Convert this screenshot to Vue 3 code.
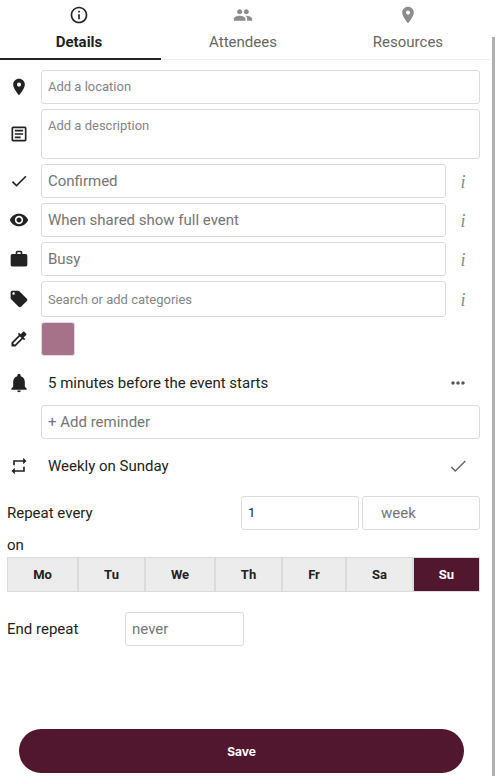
<script setup>
const icons = {
  info: 'M11 7h2v2h-2zm0 4h2v6h-2zm1-9C6.48 2 2 6.48 2 12s4.48 10 10 10 10-4.48 10-10S17.52 2 12 2zm0 18c-4.41 0-8-3.59-8-8s3.59-8 8-8 8 3.59 8 8-3.59 8-8 8z',
  group: 'M16 11c1.66 0 2.99-1.34 2.99-3S17.66 5 16 5c-1.66 0-3 1.34-3 3s1.34 3 3 3zm-8 0c1.66 0 2.99-1.34 2.99-3S9.66 5 8 5C6.34 5 5 6.34 5 8s1.34 3 3 3zm0 2c-2.33 0-7 1.17-7 3.5V19h14v-2.5c0-2.33-4.67-3.5-7-3.5zm8 0c-.29 0-.62.02-.97.05 1.16.84 1.97 1.97 1.97 3.45V19h6v-2.5c0-2.33-4.67-3.5-7-3.5z',
  place: 'M12 2C8.13 2 5 5.13 5 9c0 5.25 7 13 7 13s7-7.75 7-13c0-3.87-3.13-7-7-7zm0 9.5c-1.38 0-2.5-1.12-2.5-2.5s1.12-2.5 2.5-2.5 2.5 1.12 2.5 2.5-1.12 2.5-2.5 2.5z',
  article: 'M19 5v14H5V5h14m0-2H5c-1.1 0-2 .9-2 2v14c0 1.1.9 2 2 2h14c1.1 0 2-.9 2-2V5c0-1.1-.9-2-2-2zM14 17H7v-2h7v2zm3-4H7v-2h10v2zm0-4H7V7h10v2z',
  check: 'M9 16.17L4.83 12l-1.42 1.41L9 19 21 7l-1.41-1.41z',
  eye: 'M12 4.5C7 4.5 2.73 7.61 1 12c1.73 4.39 6 7.5 11 7.5s9.27-3.11 11-7.5c-1.73-4.39-6-7.5-11-7.5zM12 17c-2.76 0-5-2.24-5-5s2.24-5 5-5 5 2.24 5 5-2.24 5-5 5zm0-8c-1.66 0-3 1.34-3 3s1.34 3 3 3 3-1.34 3-3-1.34-3-3-3z',
  work: 'M20 6h-4V4c0-1.11-.89-2-2-2h-4c-1.11 0-2 .89-2 2v2H4c-1.11 0-1.99.89-1.99 2L2 19c0 1.11.89 2 2 2h16c1.11 0 2-.89 2-2V8c0-1.11-.89-2-2-2zm-6 0h-4V4h4v2z',
  tag: 'M21.41 11.58l-9-9C12.05 2.22 11.55 2 11 2H4c-1.1 0-2 .9-2 2v7c0 .55.22 1.05.59 1.42l9 9c.36.36.86.58 1.41.58.55 0 1.05-.22 1.41-.59l7-7c.37-.36.59-.86.59-1.41 0-.55-.23-1.06-.59-1.42zM5.5 7C4.67 7 4 6.33 4 5.5S4.67 4 5.5 4 7 4.67 7 5.5 6.33 7 5.5 7z',
  colorize: 'M20.71 5.63l-2.34-2.34c-.39-.39-1.02-.39-1.41 0l-3.12 3.12-1.93-1.91-1.41 1.41 1.42 1.42L3 16.25V21h4.75l8.92-8.92 1.42 1.42 1.41-1.41-1.92-1.92 3.12-3.12c.4-.4.4-1.03.01-1.42zM6.92 19L5 17.08l8.06-8.06 1.92 1.92L6.92 19z',
  bell: 'M12 23c1.2 0 2.2-.9 2.2-2.1H9.8C9.8 22.1 10.8 23 12 23zm7-6.5V11c0-3.4-1.8-6.2-5-7V3.2C14 2 13.1 1 12 1s-2 1-2 2.2V4c-3.2.8-5 3.6-5 7v5.5L2.8 18.6V20h18.4v-1.4L19 16.5z',
  repeat: 'M7 7h10v3l4-4-4-4v3H5v6h2V7zm10 10H7v-3l-4 4 4 4v-3h12v-6h-2v4z',
  more: 'M6 10c-1.1 0-2 .9-2 2s.9 2 2 2 2-.9 2-2-.9-2-2-2zm12 0c-1.1 0-2 .9-2 2s.9 2 2 2 2-.9 2-2-.9-2-2-2zm-6 0c-1.1 0-2 .9-2 2s.9 2 2 2 2-.9 2-2-.9-2-2-2z'
}
const tabs = [
  { label: 'Details', icon: 'info', active: true, width: 161 },
  { label: 'Attendees', icon: 'group', width: 164 },
  { label: 'Resources', icon: 'place', width: 165 }
]
const infoRows = [
  { icon: 'check', text: 'Confirmed' },
  { icon: 'eye', text: 'When shared show full event' },
  { icon: 'work', text: 'Busy' },
  { icon: 'tag', text: 'Search or add categories', small: true }
]
const days = [
  { t: 'Mo', w: 71 }, { t: 'Tu', w: 67 }, { t: 'We', w: 70 }, { t: 'Th', w: 67 },
  { t: 'Fr', w: 64 }, { t: 'Sa', w: 67 }, { t: 'Su', w: 67, on: true }
]
</script>

<template>
  <div class="page">
    <div class="scrollbar"></div>
    <nav class="tabs">
      <div v-for="t in tabs" :key="t.label" class="tab" :class="{ active: t.active }" :style="{ width: t.width + 'px' }">
        <svg viewBox="0 0 24 24" class="tab-icon"><path :d="icons[t.icon]" /></svg>
        <span>{{ t.label }}</span>
      </div>
    </nav>

    <section class="form">
      <div class="row">
        <svg viewBox="0 0 24 24" class="ico"><path :d="icons.place" /></svg>
        <div class="field ph small">Add a location</div>
      </div>
      <div class="row">
        <svg viewBox="0 0 24 24" class="ico"><path :d="icons.article" /></svg>
        <div class="field ph small desc">Add a description</div>
      </div>
      <div v-for="r in infoRows" :key="r.icon" class="row">
        <svg viewBox="0 0 24 24" class="ico"><path :d="icons[r.icon]" /></svg>
        <div class="field ph" :class="{ small: r.small, tall: r.small }">{{ r.text }}</div>
        <span class="i">i</span>
      </div>
      <div class="row">
        <svg viewBox="0 0 24 24" class="ico"><path :d="icons.colorize" /></svg>
        <div class="swatch"></div>
      </div>
      <div class="row plain reminder">
        <svg viewBox="0 0 24 24" class="ico"><path :d="icons.bell" /></svg>
        <span class="plain-text">5 minutes before the event starts</span>
        <svg viewBox="0 0 24 24" class="end-ico"><path :d="icons.more" /></svg>
      </div>
      <div class="row indent">
        <div class="field ph">+ Add reminder</div>
      </div>
      <div class="row plain weekly">
        <svg viewBox="0 0 24 24" class="ico"><path :d="icons.repeat" /></svg>
        <span class="plain-text">Weekly on Sunday</span>
        <svg viewBox="0 0 24 24" class="end-ico thin"><path d="M4 13.2 8.8 18 20.8 6" /></svg>
      </div>
    </section>

    <section class="repeat">
      <div class="every">
        <span class="label">Repeat every</span>
        <div class="field num">1</div>
        <div class="field ph unit">week</div>
      </div>
      <div class="on">on</div>
      <div class="days">
        <div v-for="d in days" :key="d.t" class="day" :class="{ sel: d.on }" :style="{ width: d.w + 'px' }">{{ d.t }}</div>
      </div>
      <div class="end">
        <span class="label end-label">End repeat</span>
        <div class="field ph never">never</div>
      </div>
    </section>

    <button class="save">Save</button>
  </div>
</template>

<style scoped>
.page {
  position: relative;
  width: 496px;
  height: 776px;
  overflow: hidden;
  background: #fff;
  display: flex;
  flex-direction: column;
  font-family: Roboto, sans-serif;
  color: #222;
}
.scrollbar {
  position: absolute;
  left: 492px;
  top: 37px;
  bottom: 0;
  width: 3px;
  background: #b0b0b0;
}
.tabs {
  display: flex;
  width: 490px;
  height: 60px;
  flex: none;
}
.tab {
  display: flex;
  flex-direction: column;
  align-items: center;
  box-sizing: border-box;
  height: 60px;
  padding-top: 5px;
  border-bottom: 1px solid #eee;
  font-size: 15px;
  line-height: 20px;
  color: #666;
}
.tab:last-child { padding-left: 1px; }
.tab-icon {
  width: 20px;
  height: 20px;
  fill: #8c8c8c;
  margin-bottom: 7px;
}
.tab.active {
  border-bottom: 2px solid #222;
  padding-right: 3px;
  color: #222;
  font-weight: 700;
}
.tab.active .tab-icon { fill: #222; }
.form {
  display: flex;
  flex-direction: column;
  gap: 5px;
  padding: 10px 16px 0 0;
}
.row {
  display: flex;
  align-items: center;
}
.ico {
  width: 20px;
  height: 20px;
  fill: #222;
  margin-left: 9px;
  margin-right: 12px;
  flex: none;
}
.field {
  flex: 1;
  box-sizing: border-box;
  height: 34px;
  border: 1px solid #dbdbdb;
  border-radius: 3px;
  background: #fff;
  padding: 0 6px;
  line-height: 32px;
  font-size: 15px;
  color: #222;
}
.ph { color: #757575; }
.small { font-size: 13px; line-height: 32px; color: #858585; }
.desc { height: 50px; line-height: 32px; }
.tall { height: 36px; line-height: 35px; }
.i {
  width: 34px;
  flex: none;
  padding-top: 2px;
  text-align: center;
  font-family: "Liberation Serif", serif;
  font-style: italic;
  font-size: 18px;
  color: #888;
}
.swatch {
  width: 34px;
  height: 34px;
  box-sizing: border-box;
  border: 1px solid #dbdbdb;
  border-radius: 3px;
  background: #a5728a;
}
.plain { height: 34px; }
.reminder { margin-top: 5px; }
.plain-text {
  flex: 1;
  font-size: 15px;
  padding-left: 7px;
  color: #222;
}
.end-ico {
  width: 20px;
  height: 20px;
  fill: #555;
  margin-right: 12px;
  flex: none;
}
.thin {
  fill: none;
  stroke: #666;
  stroke-width: 1.8;
}
.indent { padding-left: 41px; }
.weekly { margin-top: 5px; }
.repeat {
  display: flex;
  flex-direction: column;
  padding: 13px 16px 0 7px;
}
.every {
  display: flex;
  align-items: center;
  gap: 3px;
}
.label { font-size: 15px; color: #222; }
.every .label { flex: 1; }
.num { flex: none; width: 118px; font-size: 13px; color: #222; }
.unit { flex: none; width: 118px; padding-left: 18px; }
.on {
  margin-top: 5px;
  font-size: 15px;
  line-height: 20px;
  color: #222;
}
.days {
  display: flex;
  margin-top: 2px;
  width: 473px;
  height: 35px;
}
.day {
  flex: none;
  box-sizing: border-box;
  border: 1px solid #dbdbdb;
  background: #ececec;
  text-align: center;
  line-height: 33px;
  font-size: 13px;
  font-weight: 700;
  color: #222;
}
.day.sel {
  background: #51172f;
  color: #fff;
}
.end {
  display: flex;
  align-items: center;
  margin-top: 20px;
}
.end-label { width: 118px; }
.never { flex: none; width: 119px; }
.save {
  margin: auto 0 3px 19px;
  width: 445px;
  height: 44px;
  flex: none;
  border: none;
  border-radius: 22px;
  background: #51172f;
  color: #fff;
  font-family: Inter, sans-serif;
  font-weight: 700;
  font-size: 12px;
}
</style>
